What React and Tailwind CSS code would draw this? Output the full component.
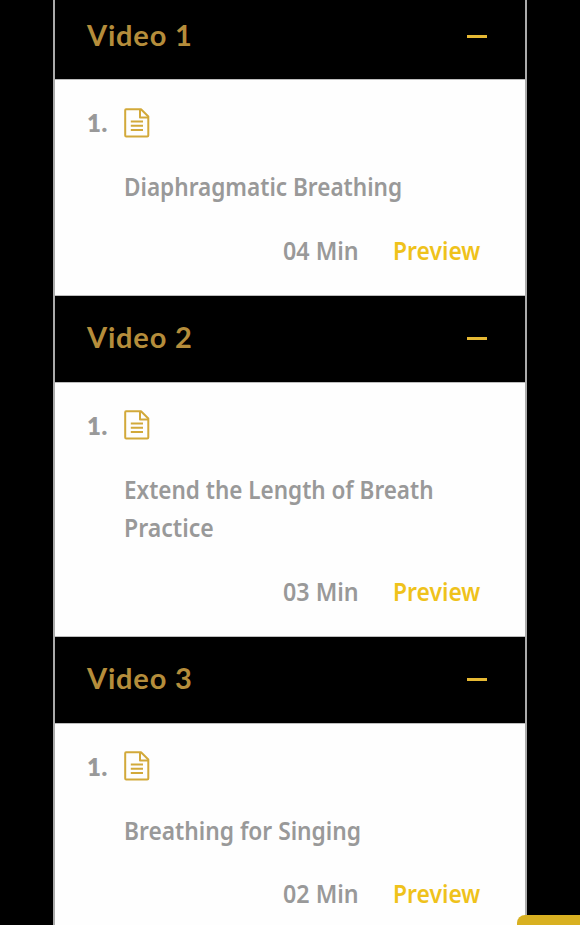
const lessons = [
  { heading: 'Video 1', lines: [{ text: 'Diaphragmatic Breathing', fit: 'scale-x-[0.903]' }], time: '04 Min' },
  {
    heading: 'Video 2',
    lines: [
      { text: 'Extend the Length of Breath', fit: 'scale-x-[0.9]' },
      { text: 'Practice', fit: 'scale-x-[0.923]' },
    ],
    time: '03 Min',
  },
  { heading: 'Video 3', lines: [{ text: 'Breathing for Singing', fit: 'scale-x-[0.91]' }], time: '02 Min' },
];

function DocumentIcon() {
  return (
    <svg className="h-[30px] w-[26px]" viewBox="0 0 26 30" fill="none" stroke="#d2a93a" strokeWidth="2" strokeLinejoin="round">
      <path d="M2 1.2H17L24.3 8.5V27.5Q24.3 28.6 23.2 28.6H2.2Q1.2 28.6 1.2 27.5V2.2Q1.2 1.2 2 1.2Z" />
      <path d="M16 1.5V9.5H24" />
      <path d="M6.8 13.5H19M6.8 17.7H19M6.8 21.9H19" strokeWidth="2" />
    </svg>
  );
}

function Lesson({ heading, lines, time }) {
  return (
    <section>
      <header className="flex h-[86px] items-center justify-between bg-black pr-[38px] pb-[3px] pl-8">
        <h2 className="font-[Lato,sans-serif] text-[29px] leading-[40px] font-bold tracking-[0.8px] whitespace-nowrap text-[#b58d3b]">{heading}</h2>
        <span className="mt-[3px] h-[3px] w-5 bg-[#e6b934]" />
      </header>
      <div className="border-y border-[#bdbdbd] bg-[#fefefe] pt-[23px] pb-[25px] pl-8 font-['Noto_Sans',sans-serif] text-[25px] leading-[39px] font-semibold text-[#999]">
        <div className="flex h-[39px] items-center">
          <span className="w-[37px] font-[Lato,sans-serif] text-[24px] font-extrabold tracking-[0.5px]">1.</span>
          <DocumentIcon />
        </div>
        <div className="mt-[25px] pl-[37px] leading-[38.5px]">
          {lines.map((line) => (
            <p key={line.text} className={`w-max origin-left whitespace-nowrap ${line.fit}`}>{line.text}</p>
          ))}
        </div>
        <div className="mt-[25px] flex whitespace-nowrap">
          <span className="ml-[196px] w-[110px]">
            <span className="inline-block origin-left scale-x-[0.93]">{time}</span>
          </span>
          <span className="inline-block origin-left scale-x-[0.914] text-[#efc21b]">Preview</span>
        </div>
      </div>
    </section>
  );
}

export default function App() {
  return (
    <main className="relative h-[925px] overflow-hidden bg-black">
      <div className="-mt-[7px] ml-[53px] h-[932px] w-[474px] overflow-hidden border-x-2 border-[#ababab] bg-white">
        {lessons.map((lesson) => (
          <Lesson key={lesson.heading} {...lesson} />
        ))}
      </div>
      <div className="absolute top-[915px] left-[517px] h-12 w-24 rounded-lg bg-[#d8b021]" />
    </main>
  );
}
